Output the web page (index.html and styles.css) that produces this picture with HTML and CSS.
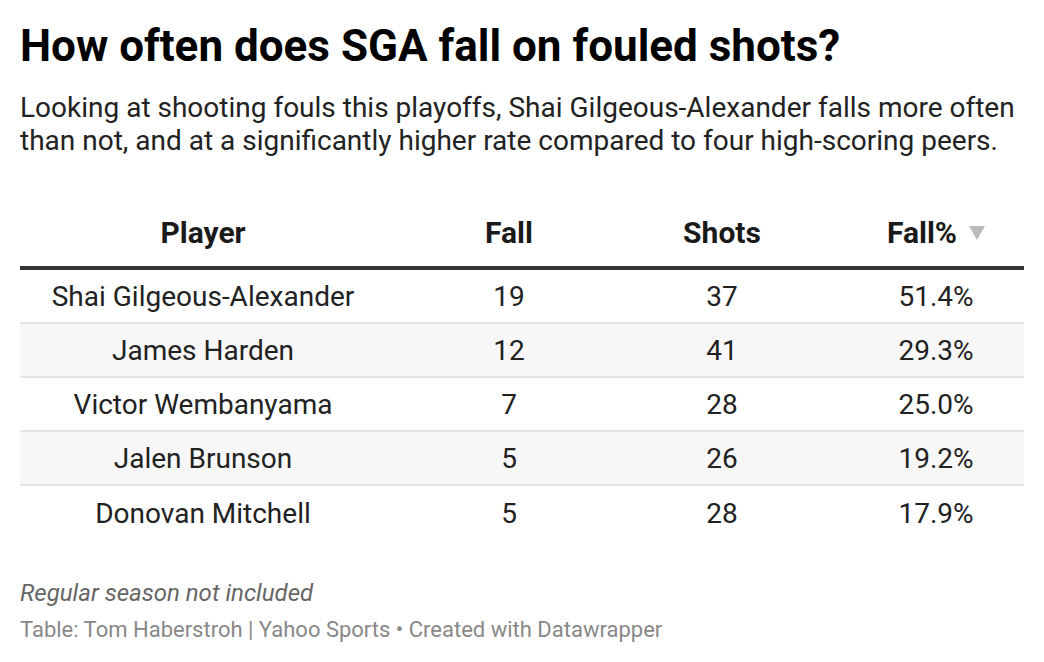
FILE: index.html
```html
<!DOCTYPE html>
<html lang="en">
<head>
<meta charset="utf-8">
<title>How often does SGA fall on fouled shots?</title>
<link rel="stylesheet" href="styles.css">
</head>
<body>
<main class="chart">
  <h1 class="title">How often does SGA fall on fouled shots?</h1>
  <p class="desc">Looking at shooting fouls this playoffs, Shai Gilgeous-Alexander falls more often than not, and at a significantly higher rate compared to four high-scoring peers.</p>
  <div class="table">
    <div class="row head">
      <div class="cell c1">Player</div>
      <div class="cell c2">Fall</div>
      <div class="cell c3">Shots</div>
      <div class="cell c4">Fall%<svg class="sort" width="16" height="14" viewBox="0 0 16 14"><path d="M0 0 H16 L8 14 Z" fill="#bbb"/></svg></div>
    </div>
    <div class="row">
      <div class="cell c1">Shai Gilgeous-Alexander</div>
      <div class="cell c2">19</div>
      <div class="cell c3">37</div>
      <div class="cell c4">51.4%</div>
    </div>
    <div class="row alt">
      <div class="cell c1">James Harden</div>
      <div class="cell c2">12</div>
      <div class="cell c3">41</div>
      <div class="cell c4">29.3%</div>
    </div>
    <div class="row">
      <div class="cell c1">Victor Wembanyama</div>
      <div class="cell c2">7</div>
      <div class="cell c3">28</div>
      <div class="cell c4">25.0%</div>
    </div>
    <div class="row alt">
      <div class="cell c1">Jalen Brunson</div>
      <div class="cell c2">5</div>
      <div class="cell c3">26</div>
      <div class="cell c4">19.2%</div>
    </div>
    <div class="row last">
      <div class="cell c1">Donovan Mitchell</div>
      <div class="cell c2">5</div>
      <div class="cell c3">28</div>
      <div class="cell c4">17.9%</div>
    </div>
  </div>
  <p class="notes">Regular season not included</p>
  <p class="byline">Table: Tom Haberstroh | Yahoo Sports &bull; Created with Datawrapper</p>
</main>
</body>
</html>
```

FILE: styles.css
```css
* { box-sizing: border-box; }
html, body { margin: 0; padding: 0; background: #fff; }
body {
  font-family: Roboto, "Liberation Sans", Arial, sans-serif;
  color: #222;
}
.chart {
  padding: 20px 20px 0 20px;
  width: 1044px;
}
.title {
  margin: 0;
  font-size: 44px;
  line-height: 52px;
  font-weight: 700;
  color: #000;
}
.desc {
  margin: 19px 0 0 0;
  font-size: 28px;
  line-height: 33px;
  color: #222;
}
.table {
  margin-top: 41px;
  display: flex;
  flex-direction: column;
}
.row {
  display: grid;
  grid-template-columns: 366px 246px 180px 212px;
  height: 54px;
  border-bottom: 2px solid #e4e4e4;
  font-size: 28px;
  color: #222;
}
.row.alt { background: #f7f7f7; }
.row.last { border-bottom: none; }
.row.head {
  height: 72px;
  border-bottom: 4px solid #333;
  font-weight: 700;
  font-size: 30px;
  color: #1a1a1a;
}
.cell {
  display: flex;
  align-items: center;
  justify-content: center;
}
.c4 { padding-left: 36px; }
.sort {
  margin-left: 12px;
  margin-top: 2px;
}
.notes {
  margin: 39px 0 0 0;
  font-size: 24px;
  line-height: 28px;
  font-style: italic;
  color: #666;
}
.byline {
  margin: 9px 0 0 0;
  font-size: 22px;
  line-height: 28px;
  color: #888;
}
```
